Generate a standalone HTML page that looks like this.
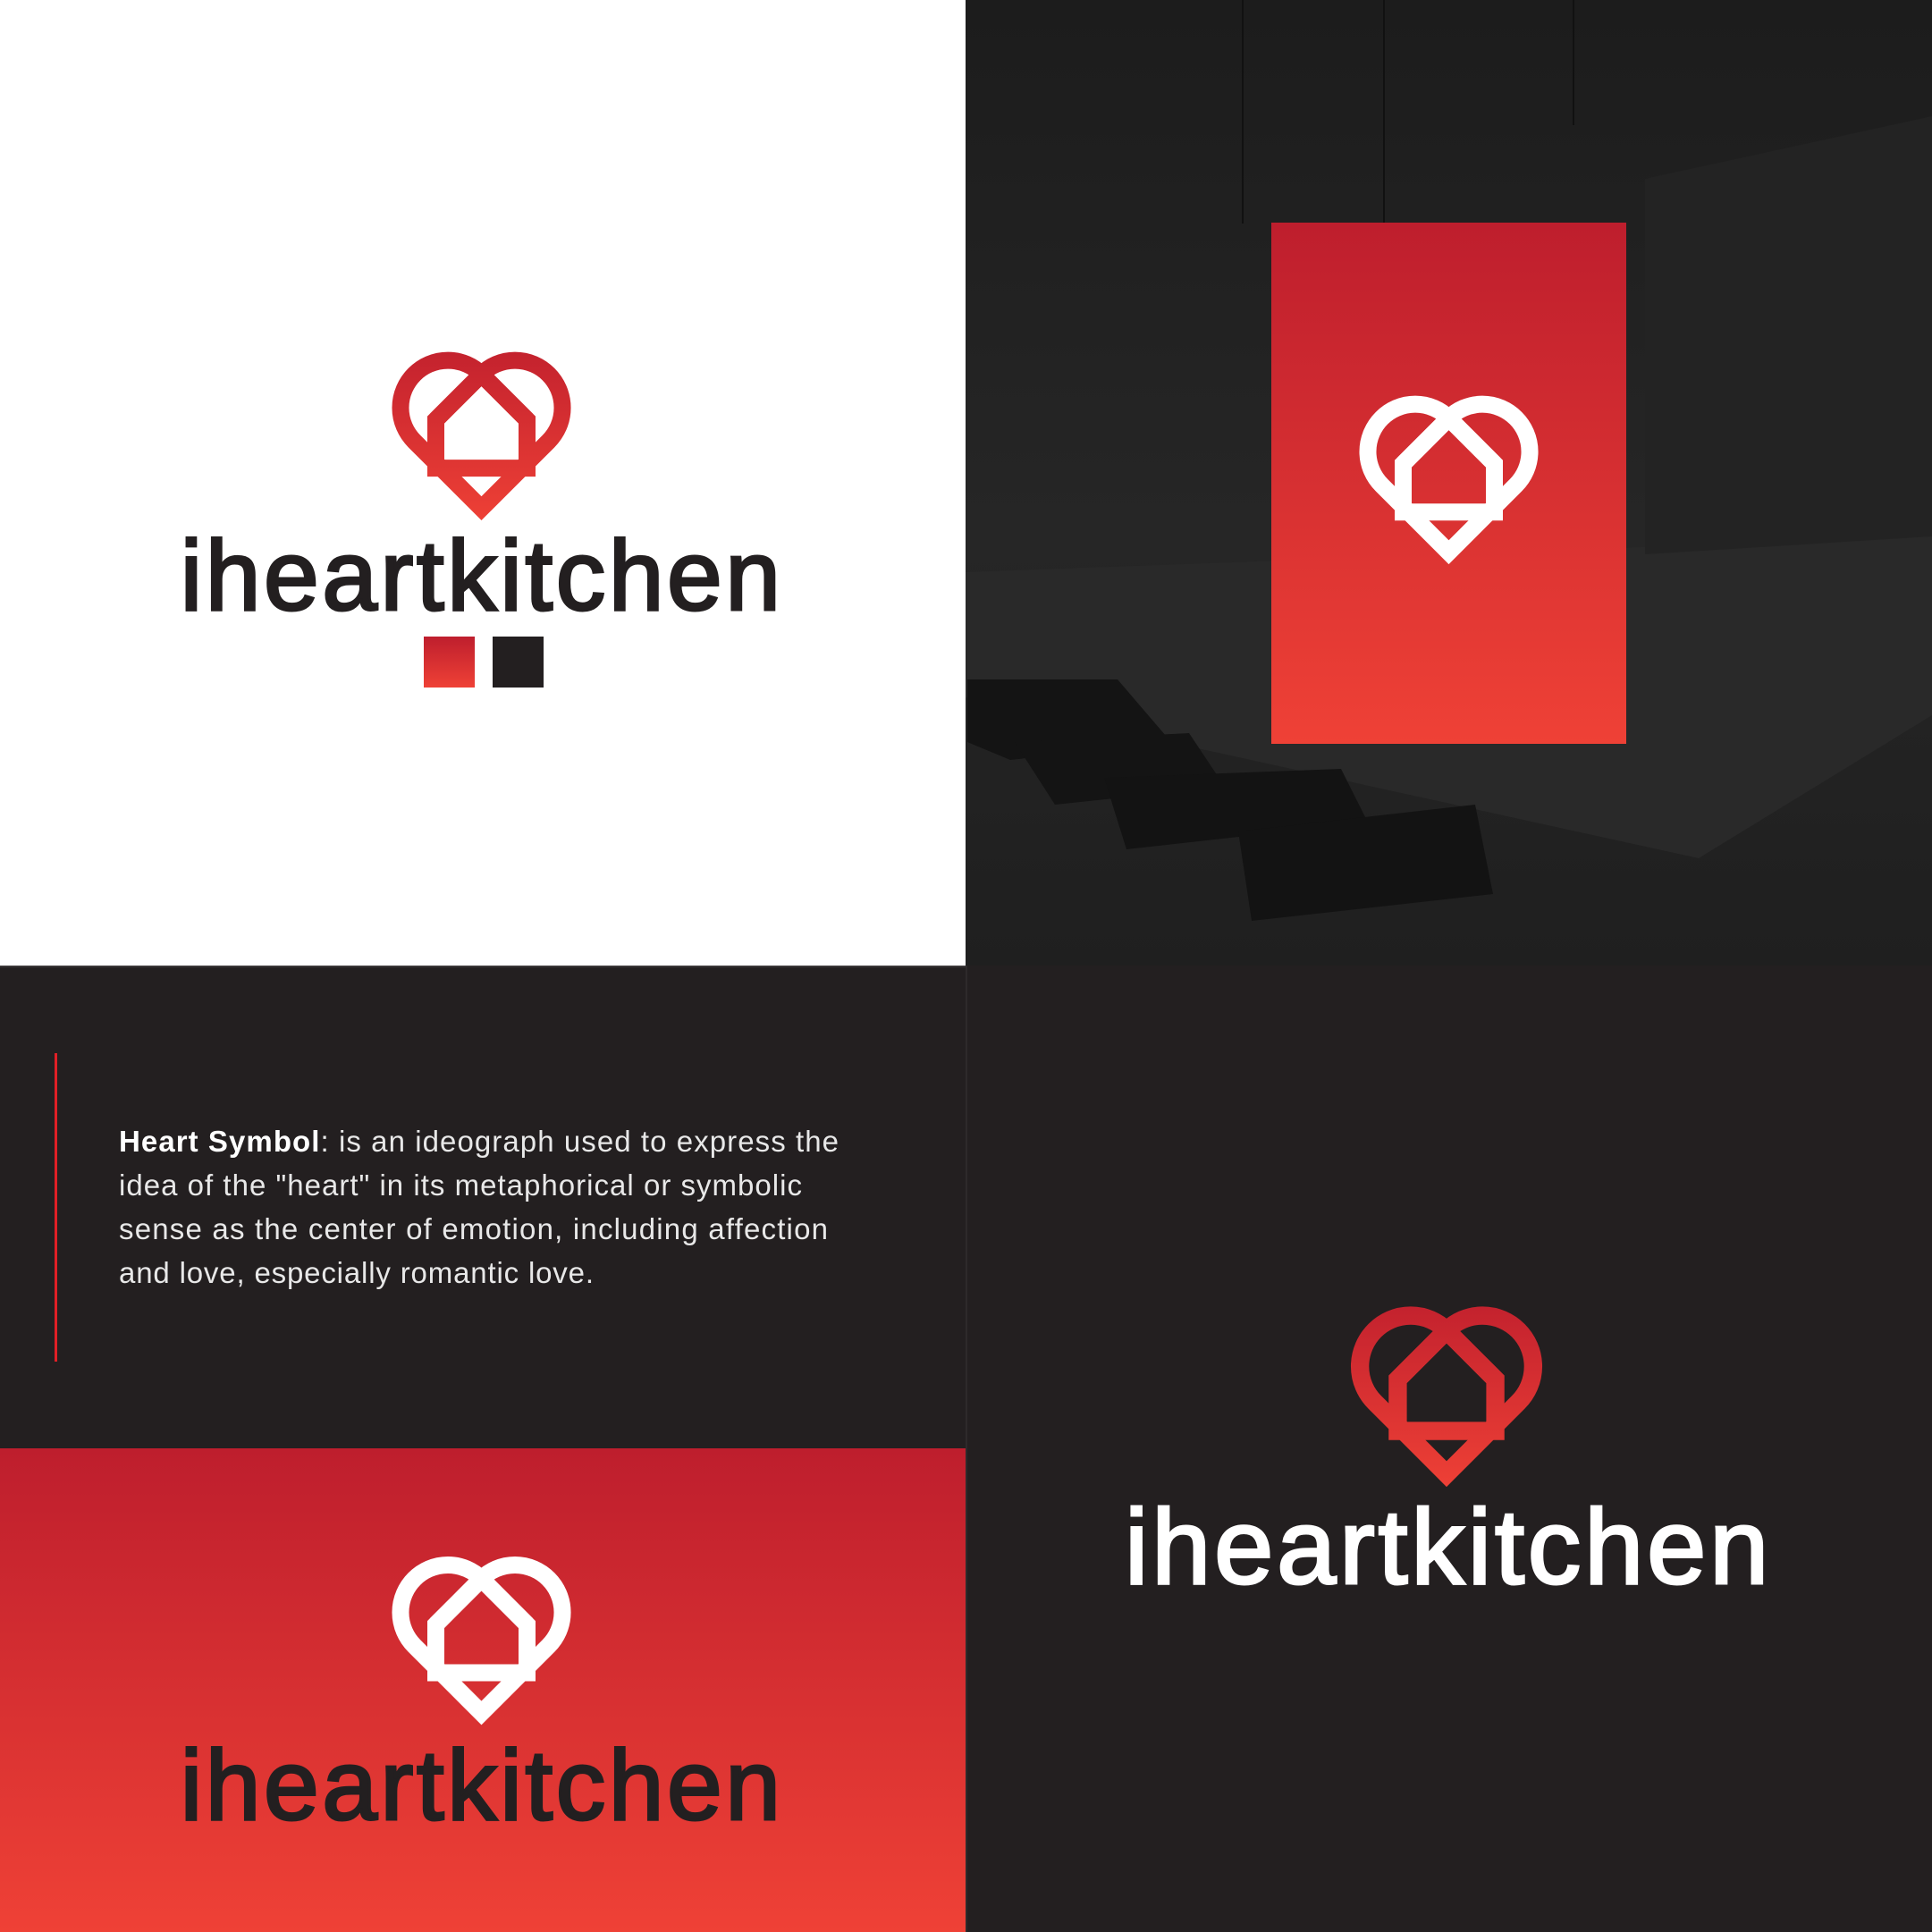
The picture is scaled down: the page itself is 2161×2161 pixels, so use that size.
<!DOCTYPE html>
<html><head><meta charset="utf-8"><style>
html,body{margin:0;padding:0;background:#fff}
svg{display:block}
</style></head><body>
<svg width="2161" height="2161" viewBox="0 0 2161 2161" xmlns="http://www.w3.org/2000/svg">
<defs>
<linearGradient id="rg" x1="0" y1="0" x2="0" y2="1">
<stop offset="0" stop-color="#be1e2d"/><stop offset="1" stop-color="#ef4136"/>
</linearGradient>
<linearGradient id="lg" gradientUnits="userSpaceOnUse" x1="0" y1="-200" x2="0" y2="20">
<stop offset="0" stop-color="#be1e2d"/><stop offset="1" stop-color="#ef4136"/>
</linearGradient>
<linearGradient id="ph" x1="0" y1="0" x2="0" y2="1">
<stop offset="0" stop-color="#1c1c1c"/><stop offset="0.55" stop-color="#262626"/><stop offset="1" stop-color="#1f1f1f"/>
</linearGradient>
<g id="logo" fill="none" stroke-width="19" stroke-linejoin="miter" stroke-linecap="butt">
<path d="M-51 -99 L0 -150 A53 53 0 0 1 75 -75 L0 0 L-75 -75 A53 53 0 0 1 0 -150 L51 -99"/>
<path d="M0 -150 L-51 -99 L-51 -45 L51 -45 L51 -99 L0 -150"/>
</g>
</defs>

<rect x="0" y="0" width="1080" height="1080" fill="#fff"/>
<g transform="translate(538.5,568.6)" stroke="url(#lg)"><use href="#logo"/></g>
<text x="539" y="682" text-anchor="middle" font-family="Liberation Sans, sans-serif" font-size="111" letter-spacing="3.5" fill="#231f20" stroke="#231f20" stroke-width="3">iheartkitchen</text>
<rect x="474" y="712" width="57" height="57" fill="url(#rg)"/>
<rect x="551" y="712" width="57" height="57" fill="#231f20"/>

<rect x="1080" y="0" width="1081" height="1080" fill="url(#ph)"/>
<polygon points="1080,640 2161,600 2161,800 1900,960 1080,780" fill="#292929"/>
<polygon points="1840,200 2161,130 2161,600 1840,620" fill="#232323"/>
<polygon points="1082,760 1250,760 1310,830 1130,850 1082,830" fill="#141414"/>
<polygon points="1135,830 1330,820 1370,880 1180,900" fill="#141414"/>
<polygon points="1235,870 1500,860 1530,920 1260,950" fill="#131313"/>
<polygon points="1385,930 1650,900 1670,1000 1400,1030" fill="#131313"/>
<line x1="1390" y1="0" x2="1390" y2="250" stroke="#111" stroke-width="2"/>
<line x1="1548" y1="0" x2="1548" y2="250" stroke="#111" stroke-width="2"/>
<line x1="1760" y1="0" x2="1760" y2="140" stroke="#111" stroke-width="2"/>
<rect x="1422" y="249" width="397" height="583" fill="url(#rg)"/>
<g transform="translate(1620.5,617.7)" stroke="#fff"><use href="#logo"/></g>

<rect x="0" y="1080" width="1080" height="540" fill="#231f20"/>
<rect x="0" y="1080" width="1080" height="2" fill="#3a3637"/>
<rect x="61" y="1178" width="3" height="345" fill="#e11f26"/>
<g font-family="Liberation Sans, sans-serif" font-size="33" fill="#e8e8e8" lengthAdjust="spacingAndGlyphs">
<text x="133" y="1288" textLength="805"><tspan font-weight="bold" fill="#fff">Heart Symbol</tspan>: is an ideograph used to express the</text>
<text x="133" y="1337" textLength="764">idea of the "heart" in its metaphorical or symbolic</text>
<text x="133" y="1386" textLength="793">sense as the center of emotion, including affection</text>
<text x="133" y="1435" textLength="531">and love, especially romantic love.</text>
</g>
<rect x="0" y="1620" width="1080" height="541" fill="url(#rg)"/>
<g transform="translate(538.5,1916)" stroke="#fff"><use href="#logo"/></g>
<text x="539" y="2035" text-anchor="middle" font-family="Liberation Sans, sans-serif" font-size="111" letter-spacing="3.5" fill="#231f20" stroke="#231f20" stroke-width="3">iheartkitchen</text>

<rect x="1080" y="1080" width="1081" height="1081" fill="#231f20"/>
<rect x="1080" y="1080" width="2" height="1081" fill="#2e2a2b"/>
<g transform="translate(1618,1648.7) scale(1.07)" stroke="url(#lg)"><use href="#logo"/></g>
<text x="1620" y="1771" text-anchor="middle" font-family="Liberation Sans, sans-serif" font-size="119" letter-spacing="3.8" fill="#fff" stroke="#fff" stroke-width="3">iheartkitchen</text>
</svg>
</body></html>
